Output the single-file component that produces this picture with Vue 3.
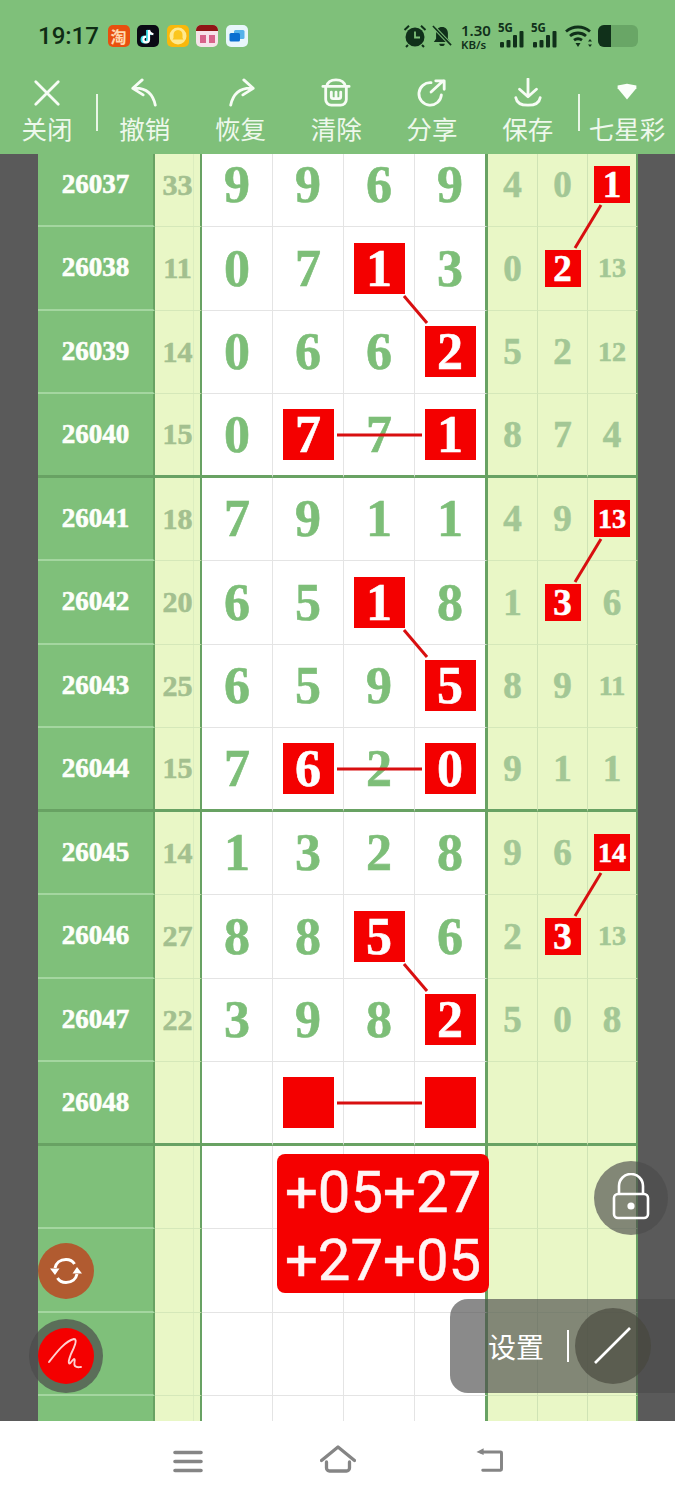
<script setup>
const tools = [
  { label: '关闭', icon: 'close' },
  { divider: true },
  { label: '撤销', icon: 'undo' },
  { label: '恢复', icon: 'redo' },
  { label: '清除', icon: 'clear' },
  { label: '分享', icon: 'share' },
  { label: '保存', icon: 'save' },
  { divider: true },
  { label: '七星彩', icon: 'tri' },
]
const rawRows = [
  ['26037', '33', '9 9 6 9', '4 0 *1'],
  ['26038', '11', '0 7 *1 3', '0 *2 13'],
  ['26039', '14', '0 6 6 *2', '5 2 12'],
  ['26040', '15', '0 *7 7 *1', '8 7 4'],
  ['26041', '18', '7 9 1 1', '4 9 *13'],
  ['26042', '20', '6 5 *1 8', '1 *3 6'],
  ['26043', '25', '6 5 9 *5', '8 9 11'],
  ['26044', '15', '7 *6 2 *0', '9 1 1'],
  ['26045', '14', '1 3 2 8', '9 6 *14'],
  ['26046', '27', '8 8 *5 6', '2 *3 13'],
  ['26047', '22', '3 9 8 *2', '5 0 8'],
  ['26048', '', '_ * _ *', '_ _ _'],
  ['', '', '_ _ _ _', '_ _ _'],
  ['', '', '_ _ _ _', '_ _ _'],
  ['', '', '_ _ _ _', '_ _ _'],
  ['', '', '_ _ _ _', '_ _ _'],
]
const parse = (s) =>
  s.split(' ').map((t) => ({
    red: t.startsWith('*'),
    text: t.replace('*', '').replace('_', ''),
    small: t.replace('*', '').length > 1,
  }))
const rows = rawRows.map(([id, num, main, side], i) => ({
  key: i,
  id,
  num,
  main: parse(main),
  side: parse(side),
  thick: (i + 1) % 4 === 0,
}))
const links = []
for (let b = 0; b < 3; b++) {
  const o = b * 334
  links.push([601, 51 + o, 575, 94 + o])
  links.push([404, 142 + o, 427, 169 + o])
  links.push([337, 281 + o, 422, 281 + o])
}
</script>

<template>
  <div class="page">
    <header class="head">
      <div class="status">
        <div class="status-left">
          <span class="time">19:17</span>
          <span class="app taobao">淘</span>
          <span class="app tiktok">
            <svg viewBox="0 0 22 22" width="22" height="22">
              <path d="M11 4.500v9.500a2.800 2.800 0 1 1-2.800-2.800M11 4.500c.4 2.500 2 3.900 4.400 4.200" fill="none" stroke="#36e0e8" stroke-width="2.400" transform="translate(-.7 .4)"/>
              <path d="M12 5v9.500a2.800 2.800 0 1 1-2.800-2.800M12 5c.4 2.500 2 3.900 4.400 4.200" fill="none" stroke="#fff" stroke-width="2.200"/>
            </svg>
          </span>
          <span class="app bell-app">
            <svg viewBox="0 0 22 22" width="22" height="22">
              <circle cx="11" cy="11" r="8.500" fill="#ffe98f"/>
              <path d="M11 5c3 0 4.500 2.200 4.500 5v3l1 1.500h-11l1-1.500v-3C6.500 7.200 8 5 11 5z" fill="#fbc61e"/>
            </svg>
          </span>
          <span class="app cal">
            <span class="cal-top"></span>
            <span class="cal-body">
              <span class="cal-dot"></span>
              <span class="cal-dot"></span>
            </span>
          </span>
          <span class="app msg">
            <svg viewBox="0 0 22 22" width="22" height="22"><rect x="8" y="5" width="10.500" height="9" rx="1.500" fill="#55b2ea"/><rect x="3.500" y="8" width="10.500" height="8.500" rx="1.500" fill="#0a6fd0"/></svg>
          </span>
        </div>
        <div class="status-right">
          <svg class="st-alarm" viewBox="0 0 24 24" width="24" height="24">
            <circle cx="12" cy="13" r="9.500" fill="#10301a"/>
            <path d="M12 7.500V13.500H17" fill="none" stroke="#7fc07a" stroke-width="1.800"/>
            <path d="M1.500 6 6 1.800M22.500 6 18 1.800M5 21l-2 2M19 21l2 2" stroke="#10301a" stroke-width="2"/>
          </svg>
          <svg class="st-bell" viewBox="0 0 22 24" width="20" height="24">
            <path d="M11 2c4 0 6.500 3 6.500 7v6l2.500 3.500H2L4.500 15V9c0-4 2.500-7 6.500-7z" fill="#10301a"/>
            <path d="M8 20.500h6a3 2.500 0 0 1-6 0z" fill="#10301a"/>
            <path d="M1 1l20 21" stroke="#7fc07a" stroke-width="4"/>
            <path d="M1 1l20 21" stroke="#10301a" stroke-width="1.800"/>
          </svg>
          <span class="speed"><b>1.30</b><i>KB/s</i></span>
          <span class="sig" v-for="n in 2" :key="n">
            <span class="g5">5G</span>
            <svg viewBox="0 0 27 24" width="27" height="24">
              <rect x="2" y="18" width="4" height="5.500" rx="1" fill="#10301a"/>
              <rect x="8.500" y="16" width="4" height="7.500" rx="1" fill="#10301a"/>
              <rect x="15" y="11" width="4" height="12.500" rx="1" fill="#10301a"/>
              <rect x="21.500" y="7" width="4" height="16.500" rx="1" fill="#10301a"/>
            </svg>
          </span>
          <svg class="st-wifi" viewBox="0 0 28 24" width="28" height="24">
            <path d="M1 7.500c7-6 17-6 24 0M5 12c4.800-4 11.200-4 16 0M9 16.200c2.500-1.800 5.500-1.800 8 0" fill="none" stroke="#10301a" stroke-width="2.800"/>
            <path d="M10.500 19h5L13 23zM25 15l2 2.500h-4zM25 23l2-2.500h-4z" fill="#10301a"/>
          </svg>
          <span class="battery"><span class="battery-fill"></span></span>
        </div>
      </div>
      <nav class="tools">
        <template v-for="(t, i) in tools" :key="i">
          <span v-if="t.divider" class="divider"></span>
          <div v-else class="tool">
            <svg class="tool-icon" viewBox="0 0 32 32" width="32" height="32">
              <path v-if="t.icon === 'close'" d="M4 4l24 24M28 4L4 28" />
              <path v-if="t.icon === 'undo'" d="M3 11l10-9M3 11l11 7M3 11c12-1 21 4 24 18" />
              <path v-if="t.icon === 'redo'" d="M29 11L19 2M29 11l-11 7M29 11C17 10 8 15 5 29" />
              <path v-if="t.icon === 'clear'" d="M2 9h28M6 9C7 4 11 2 16 2s9 2 10 7M5 9v14a6 6 0 0 0 6 6h10a6 6 0 0 0 6-6V9M11 15v5a2 2 0 0 0 2 2h6a2 2 0 0 0 2-2v-5M16 15v7" />
              <path v-if="t.icon === 'share'" d="M26 18a12 12 0 1 1-11-13M15 15L28 3M20 3h9v9" />
              <path v-if="t.icon === 'save'" d="M16 1v19M7 12l9 8 9-8M3 21c1 6 6 8 13 8s12-2 13-8" />
              <polygon v-if="t.icon === 'tri'" class="solid" points="6,8 16,6 26,8 26,11 16,23 6,11" />
            </svg>
            <span class="tool-label">{{ t.label }}</span>
          </div>
        </template>
      </nav>
    </header>

    <main class="stage">
      <div class="board">
        <div v-for="r in rows" :key="r.key" class="row" :class="{ thick: r.thick }">
          <div class="cell id">{{ r.id }}</div>
          <div class="cell num">{{ r.num }}</div>
          <div v-for="(c, i) in r.main" :key="'m' + i" class="cell main">
            <span v-if="c.red" class="mark big">{{ c.text }}</span>
            <template v-else>{{ c.text }}</template>
          </div>
          <div v-for="(c, i) in r.side" :key="'s' + i" class="cell side" :class="{ small: c.small }">
            <span v-if="c.red" class="mark tiny" :class="{ small: c.small }">{{ c.text }}</span>
            <template v-else>{{ c.text }}</template>
          </div>
        </div>
      </div>

      <svg class="links" width="675" height="1267" viewBox="0 0 675 1267">
        <line v-for="(l, i) in links" :key="i" :x1="l[0]" :y1="l[1]" :x2="l[2]" :y2="l[3]" />
      </svg>

      <div class="sum">+05+27<br />+27+05</div>

      <div class="fab lock">
        <svg viewBox="0 0 40 50" width="40" height="50">
          <path d="M8 22v-9a12 12 0 0 1 24 0v9" fill="none" stroke="#fff" stroke-width="2.600"/>
          <rect x="3" y="21" width="34" height="24" rx="4" fill="none" stroke="#fff" stroke-width="2.600"/>
          <circle cx="20" cy="33" r="3.600" fill="#fff"/>
        </svg>
      </div>

      <div class="settings">
        <span class="settings-label">设置</span>
        <span class="settings-bar"></span>
        <span class="settings-dial">
          <svg viewBox="0 0 76 76" width="76" height="76"><path d="M20 55L55 20" stroke="#fff" stroke-width="2.600" fill="none"/></svg>
        </span>
      </div>

      <div class="fab refresh">
        <svg viewBox="0 0 32 32" width="32" height="32">
          <path d="M5 13C6 8 10 4.500 16 4.500c4 0 7 2 8.500 4.500M27 19c-1 5-5 8.500-11 8.500-4 0-7-2-8.500-4.500" fill="none" stroke="#fff" stroke-width="3"/>
          <path d="M0 13.500h9.500L5 20zM22.500 18.500H32L27 12z" fill="#fff"/>
        </svg>
      </div>
      <div class="fab pen">
        <svg viewBox="0 0 56 56" width="56" height="56">
          <path d="M11 34C18 25 27 13 36 11c4 0 0 9-3 15-1 3-3 7-2 9 1 2 3-3 5-4 2 0-1 5 1 7 2 2 4 1 6 1" fill="none" stroke="#ffd0d0" stroke-width="1.900" stroke-linecap="round"/>
        </svg>
      </div>
    </main>

    <footer class="nav">
      <svg class="nav-menu" viewBox="0 0 30 24" width="30" height="24"><path d="M2 2.500h26M2 11.500h26M2 20.500h26" stroke="#858585" stroke-width="3.600" stroke-linecap="round" fill="none"/></svg>
      <svg class="nav-home" viewBox="0 0 36 28" width="36" height="28"><path d="M1.500 15.500L18 2l16.500 13.500M6.500 17v6a3 3 0 0 0 3 3h17a3 3 0 0 0 3-3v-6" stroke="#858585" stroke-width="3.300" stroke-linecap="round" stroke-linejoin="round" fill="none"/></svg>
      <svg class="nav-back" viewBox="0 0 32 28" width="32" height="28"><path d="M7 5.500h22a1 1 0 0 1 1 1V25a1 1 0 0 1-1 1H9" stroke="#858585" stroke-width="3.300" stroke-linecap="round" fill="none"/><path d="M10 1.500L2 5.500l8 3.500z" fill="#858585"/></svg>
    </footer>
  </div>
</template>

<style scoped>
.page {
  width: 675px;
  height: 1500px;
  overflow: hidden;
  display: flex;
  flex-direction: column;
  background: #fff;
  font-family: "Liberation Serif", serif;
}
.head {
  height: 154px;
  flex: none;
  background: #7fc07a;
}
.status {
  height: 72px;
  padding: 0 37px 0 38px;
  display: flex;
  justify-content: space-between;
  align-items: center;
  box-sizing: border-box;
}
.status-left {
  display: flex;
  align-items: center;
  gap: 7.500px;
}
.time {
  font: 500 24px "Roboto", sans-serif;
  color: #0f2c14;
  width: 62px;
}
.app {
  width: 22px;
  height: 22px;
  border-radius: 5px;
  display: flex;
  align-items: center;
  justify-content: center;
  overflow: hidden;
}
.taobao {
  background: #e8500f;
  color: #ffd9b0;
  font: 700 16px "Noto Sans CJK SC", sans-serif;
}
.tiktok { background: #0a0a14; }
.bell-app { background: #f9b80c; }
.cal {
  flex-direction: column;
  background: #f7e3ea;
  justify-content: flex-start;
}
.cal-top {
  height: 6px;
  width: 100%;
  background: #8f1515;
  flex: none;
}
.cal-body {
  display: flex;
  gap: 3px;
  margin-top: 4px;
}
.cal-dot {
  width: 6px;
  height: 8px;
  background: #d8638a;
}
.msg { background: #e8f6fb; }
.status-right {
  display: flex;
  align-items: center;
}
.st-alarm { margin-right: 5px; }
.st-bell { margin-right: 9px; }
.speed {
  display: flex;
  flex-direction: column;
  align-items: flex-start;
  color: #10301a;
  font-family: "Noto Sans", sans-serif;
  width: 37px;
  gap: 2px;
}
.speed b {
  font-weight: 600;
  font-size: 15px;
  line-height: 14px;
}
.speed i {
  font-style: normal;
  font-weight: 600;
  font-size: 11.500px;
  line-height: 11px;
}
.sig {
  position: relative;
  width: 27px;
  height: 24px;
  margin-right: 6px;
}
.g5 {
  position: absolute;
  left: 0;
  top: -4px;
  font: 700 11.500px "Noto Sans", sans-serif;
  color: #10301a;
}
.st-wifi { margin: 0 5px 0 1px; }
.battery {
  width: 40px;
  height: 22px;
  border-radius: 6px;
  background: #69a666;
  overflow: hidden;
  display: block;
}
.battery-fill {
  display: block;
  width: 13px;
  height: 100%;
  background: #10301a;
}
.tools {
  display: flex;
  height: 82px;
}
.tool {
  width: 95.750px;
  flex: none;
  display: flex;
  flex-direction: column;
  align-items: center;
}
.tool:first-child {
  width: 94px;
  margin-right: 2px;
}
.tool:nth-child(7) { margin-right: 2.250px; }
.tool:last-child { width: 96px; }
.tool-icon {
  width: 30px;
  height: 30px;
  margin-top: 6px;
}
.tool-icon path {
  fill: none;
  stroke: #f7fcf5;
  stroke-width: 3;
  stroke-linecap: round;
  stroke-linejoin: round;
}
.tool-icon .solid {
  fill: #fbfffa;
}
.tool-label {
  margin-top: 3px;
  font: 400 25.500px/33px "Noto Sans CJK SC", sans-serif;
  color: #eef8ec;
  white-space: nowrap;
}
.divider {
  width: 2px;
  height: 37px;
  margin: 22px -1px 0 0;
  background: #e9f6e6;
  flex: none;
}
.stage {
  position: relative;
  height: 1267px;
  flex: none;
  overflow: hidden;
  background: #5a5a5a;
}
.board {
  margin: -10.500px 0 0 38px;
  width: 600px;
}
.row {
  display: grid;
  grid-template-columns: 117px 47px 71px 71px 71px 73px 50px 50px 50px;
  height: 83.500px;
}
.cell {
  display: flex;
  align-items: center;
  justify-content: center;
  box-sizing: border-box;
  border-bottom: 1px solid #e4e4e4;
  font-weight: 700;
  -webkit-text-stroke: 0.6px currentColor;
}
.id {
  background: #7fc07a;
  color: #fdfffa;
  font-size: 27px;
  border-right: 2px solid #68a263;
  border-bottom: 2px solid #a4d6a0;
}
.num {
  background: linear-gradient(to right, transparent 38px, #dcedbf 38px, #dcedbf 39px, transparent 39px) #e9f7c6;
  color: #a3c08f;
  font-size: 30px;
  border-right: 2px solid #68a263;
  border-bottom: 1px solid #d5e8b9;
}
.main {
  background: #fff;
  color: #7dbe78;
  font-size: 52px;
  border-right: 1px solid #e4e4e4;
}
.main:nth-child(6) {
  border-right: 3px solid #68a263;
}
.side {
  background: #e9f7c6;
  color: #a3c795;
  font-size: 37px;
  border-right: 1px solid #cfe3b5;
  border-bottom: 1px solid #d5e8b9;
}
.side.small { font-size: 28px; }
.side:nth-child(9) {
  border-right: 2px solid #68a263;
}
.thick .cell {
  border-bottom: 3px solid #68a263;
}
.mark {
  display: flex;
  align-items: center;
  justify-content: center;
  background: #f40000;
  color: #fff;
}
.big {
  width: 51px;
  height: 51px;
}
.tiny {
  width: 36px;
  height: 37px;
  font-size: 37px;
}
.tiny.small { font-size: 28px; }
.links {
  position: absolute;
  left: 0;
  top: 0;
  pointer-events: none;
}
.links line {
  stroke: #d80f10;
  stroke-width: 3;
}
.sum {
  position: absolute;
  left: 277px;
  top: 1000px;
  width: 212px;
  height: 139px;
  box-sizing: border-box;
  padding-top: 4px;
  border-radius: 8px;
  background: #f50000;
  color: #fff4f4;
  font: 400 58px/68px "Roboto", sans-serif;
  -webkit-text-stroke: 0.5px #fff4f4;
  text-align: center;
}
.fab {
  position: absolute;
  border-radius: 50%;
  display: flex;
  align-items: center;
  justify-content: center;
}
.lock {
  left: 594px;
  top: 1007px;
  width: 74px;
  height: 74px;
  background: rgba(75, 75, 75, 0.65);
}
.settings {
  position: absolute;
  left: 450px;
  top: 1145px;
  width: 225px;
  height: 94px;
  box-sizing: border-box;
  padding-left: 38px;
  border-radius: 18px 0 0 18px;
  background: rgba(75, 75, 75, 0.65);
  display: flex;
  align-items: center;
  color: #fff;
}
.settings-label {
  font: 400 28px "Noto Sans CJK SC", sans-serif;
  width: 79px;
}
.settings-bar {
  width: 2px;
  height: 32px;
  background: #fff;
}
.settings-dial {
  width: 76px;
  height: 76px;
  border-radius: 50%;
  margin-left: 6px;
  background: rgba(70, 70, 60, 0.65);
}
.refresh {
  left: 38px;
  top: 1089px;
  width: 56px;
  height: 56px;
  background: #b15b30;
}
.pen {
  left: 38px;
  top: 1174px;
  width: 56px;
  height: 56px;
  background: #f40000;
  box-shadow: 0 0 0 9px rgba(75, 75, 75, 0.7);
}
.nav {
  height: 79px;
  flex: none;
  background: #fff;
  padding: 0 0 0 173px;
  box-sizing: border-box;
  display: flex;
  align-items: flex-start;
}
.nav-menu { margin-top: 29px; }
.nav-home { margin: 24px 0 0 117px; }
.nav-back { margin: 26px 0 0 117px; height: 25px; }
</style>
